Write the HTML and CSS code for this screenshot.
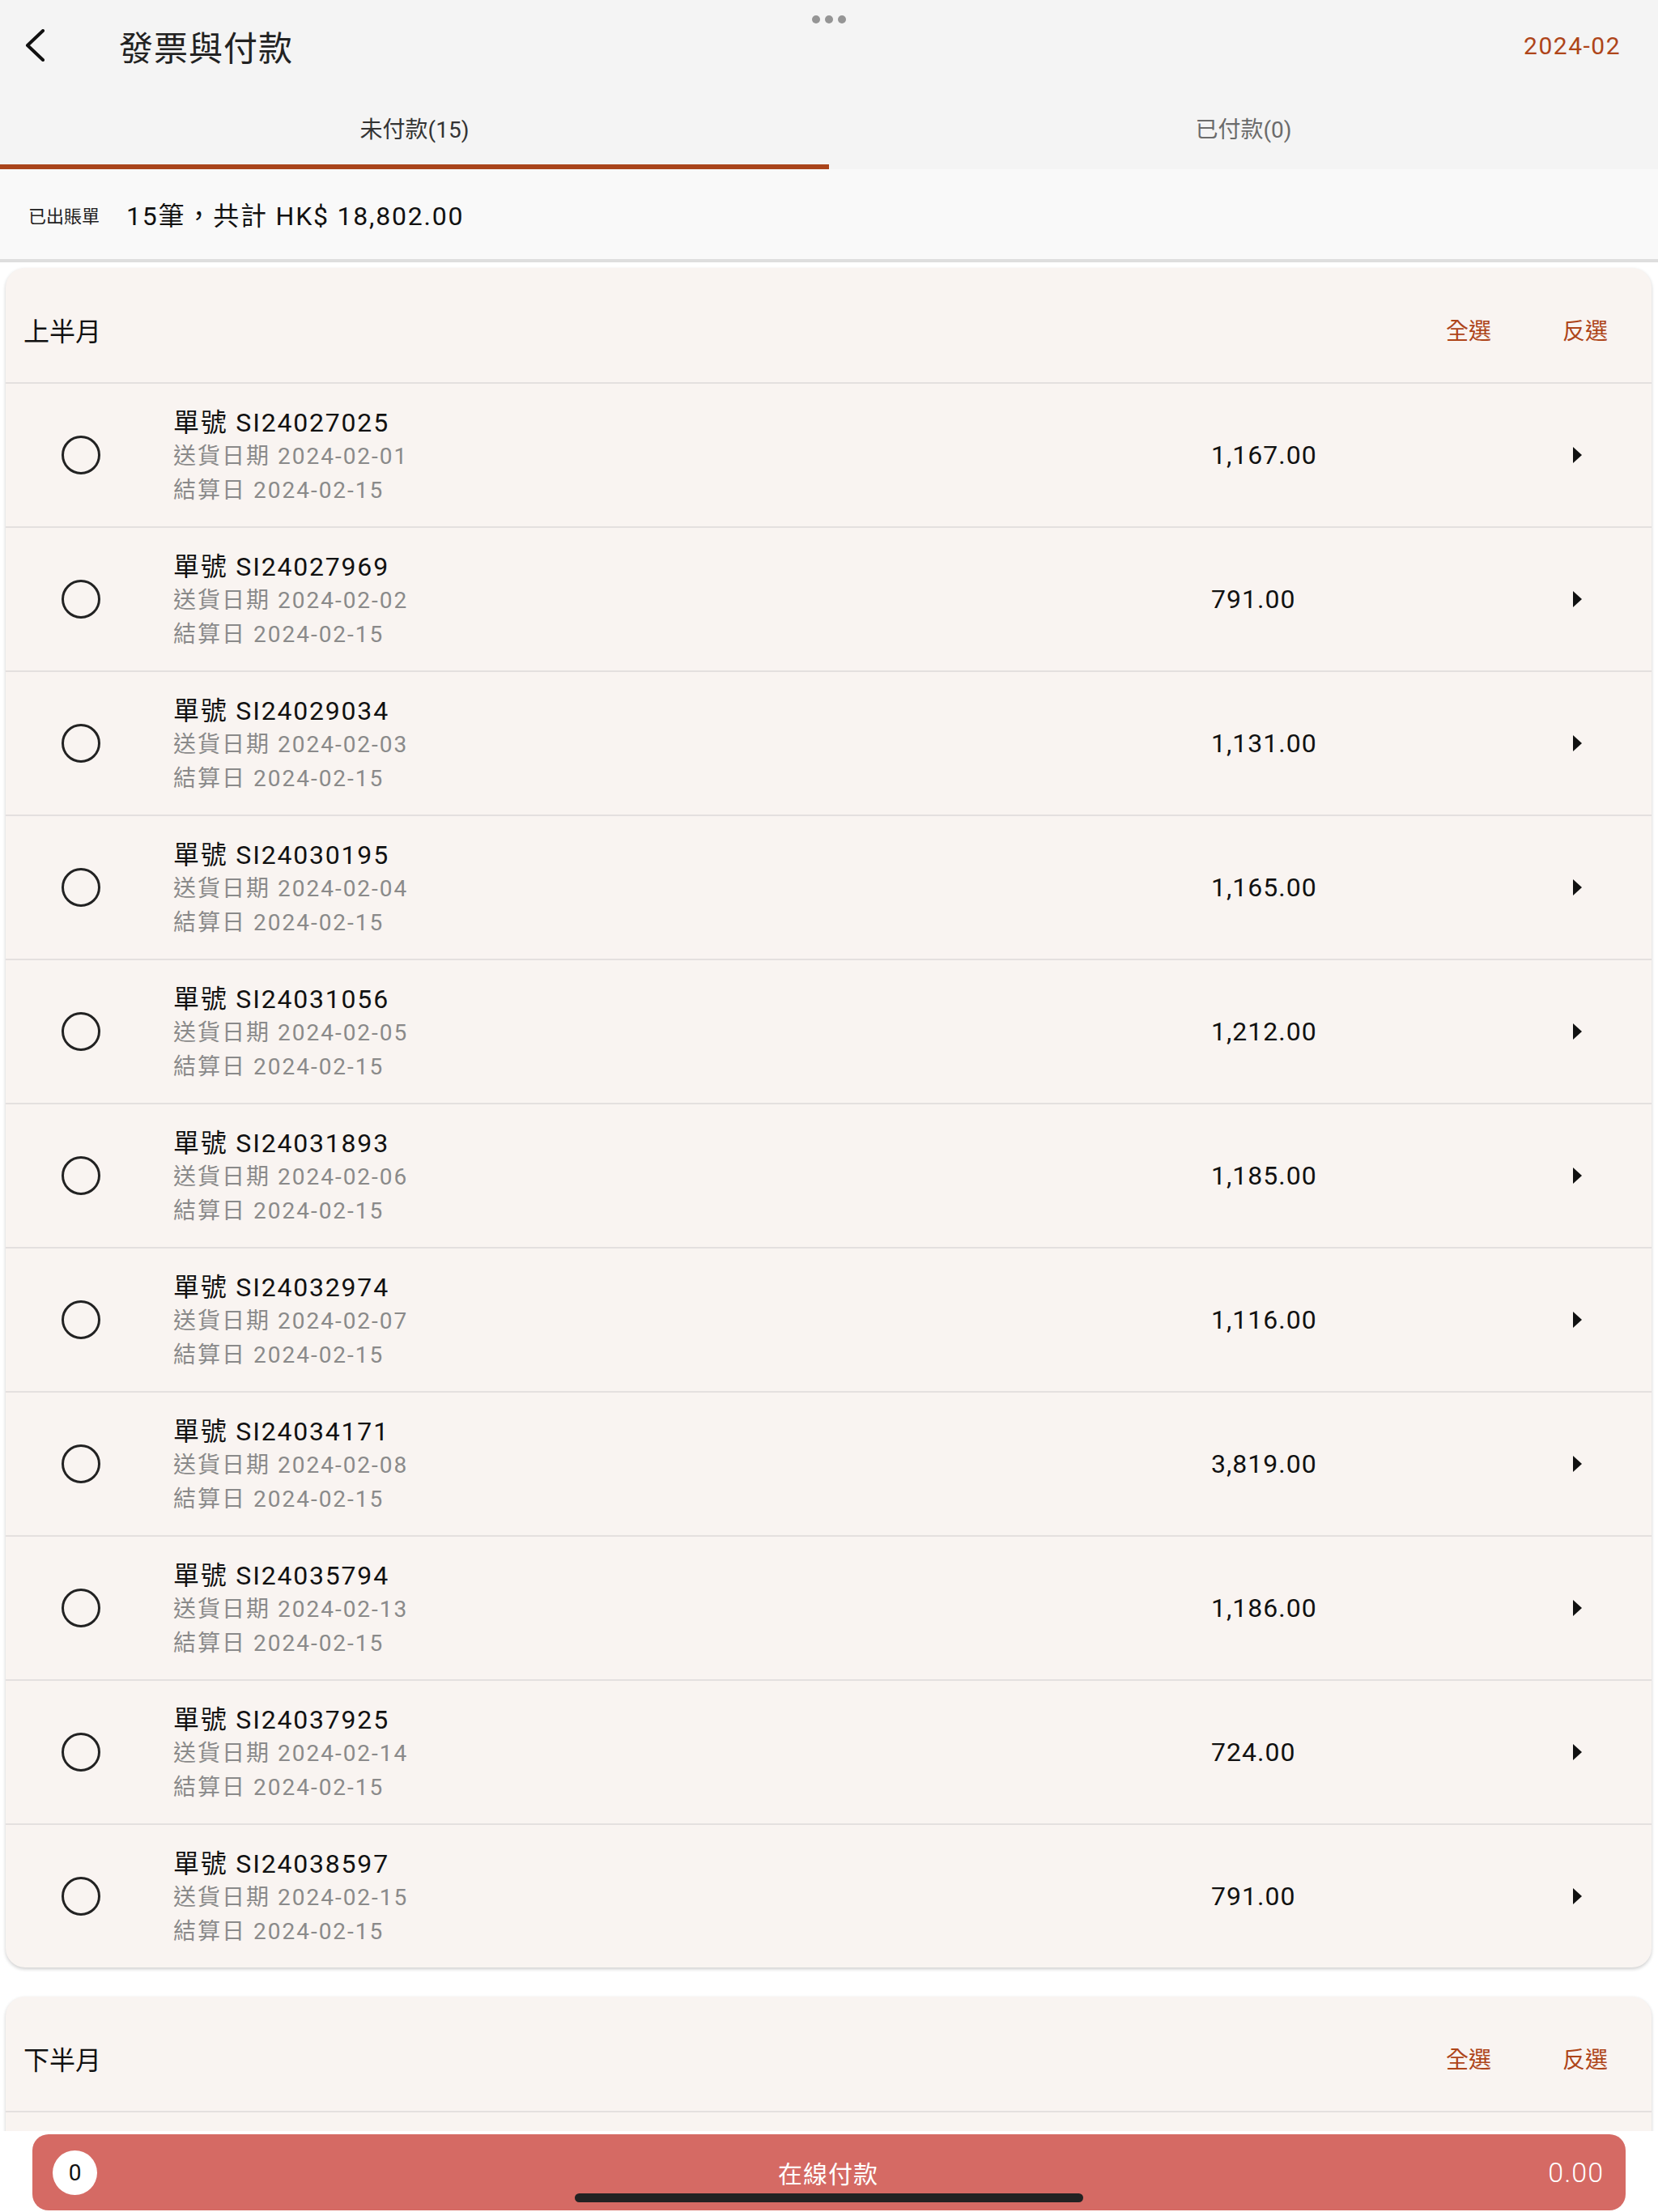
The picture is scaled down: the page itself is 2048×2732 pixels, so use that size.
FILE: index.html
```html
<!DOCTYPE html>
<html lang="zh-Hant-HK">
<head>
<meta charset="utf-8"/>
<meta content="width=device-width, initial-scale=1" name="viewport"/>
<title>發票與付款</title>
<link rel="stylesheet" href="styles.css">
</head>
<body>
<div class="app">
  <div class="dots"><span></span><span></span><span></span></div>

  <header class="topbar">
    <div class="titlebar">
      <a class="back" href="#">
        <svg width="26" height="40" viewBox="0 0 26 40"><polyline points="23,2 4,20 23,38" fill="none" stroke="#111" stroke-width="4" stroke-linecap="round" stroke-linejoin="round"/></svg>
      </a>
      <h1 class="title">發票與付款</h1>
      <span class="month">2024-02</span>
    </div>
    <nav class="tabs">
      <a class="tab active" href="#">未付款(15)</a>
      <a class="tab" href="#">已付款(0)</a>
    </nav>
  </header>

  <div class="summary">
    <span class="summary-label">已出賬單</span>
    <span class="summary-total">15筆，共計 HK$ 18,802.00</span>
  </div>

  <main class="list">
    <section class="card">
      <div class="card-head">
        <span class="card-title">上半月</span>
        <div class="card-actions"><a href="#">全選</a><a href="#">反選</a></div>
      </div>

      <div class="row">
        <span class="radio"></span>
        <div class="info"><div class="info-no">單號 SI24027025</div><div class="info-sub">送貨日期 2024-02-01</div><div class="info-sub">結算日 2024-02-15</div></div>
        <div class="amount">1,167.00</div>
        <span class="arrow"></span>
      </div>
      <div class="row">
        <span class="radio"></span>
        <div class="info"><div class="info-no">單號 SI24027969</div><div class="info-sub">送貨日期 2024-02-02</div><div class="info-sub">結算日 2024-02-15</div></div>
        <div class="amount">791.00</div>
        <span class="arrow"></span>
      </div>
      <div class="row">
        <span class="radio"></span>
        <div class="info"><div class="info-no">單號 SI24029034</div><div class="info-sub">送貨日期 2024-02-03</div><div class="info-sub">結算日 2024-02-15</div></div>
        <div class="amount">1,131.00</div>
        <span class="arrow"></span>
      </div>
      <div class="row">
        <span class="radio"></span>
        <div class="info"><div class="info-no">單號 SI24030195</div><div class="info-sub">送貨日期 2024-02-04</div><div class="info-sub">結算日 2024-02-15</div></div>
        <div class="amount">1,165.00</div>
        <span class="arrow"></span>
      </div>
      <div class="row">
        <span class="radio"></span>
        <div class="info"><div class="info-no">單號 SI24031056</div><div class="info-sub">送貨日期 2024-02-05</div><div class="info-sub">結算日 2024-02-15</div></div>
        <div class="amount">1,212.00</div>
        <span class="arrow"></span>
      </div>
      <div class="row">
        <span class="radio"></span>
        <div class="info"><div class="info-no">單號 SI24031893</div><div class="info-sub">送貨日期 2024-02-06</div><div class="info-sub">結算日 2024-02-15</div></div>
        <div class="amount">1,185.00</div>
        <span class="arrow"></span>
      </div>
      <div class="row">
        <span class="radio"></span>
        <div class="info"><div class="info-no">單號 SI24032974</div><div class="info-sub">送貨日期 2024-02-07</div><div class="info-sub">結算日 2024-02-15</div></div>
        <div class="amount">1,116.00</div>
        <span class="arrow"></span>
      </div>
      <div class="row">
        <span class="radio"></span>
        <div class="info"><div class="info-no">單號 SI24034171</div><div class="info-sub">送貨日期 2024-02-08</div><div class="info-sub">結算日 2024-02-15</div></div>
        <div class="amount">3,819.00</div>
        <span class="arrow"></span>
      </div>
      <div class="row">
        <span class="radio"></span>
        <div class="info"><div class="info-no">單號 SI24035794</div><div class="info-sub">送貨日期 2024-02-13</div><div class="info-sub">結算日 2024-02-15</div></div>
        <div class="amount">1,186.00</div>
        <span class="arrow"></span>
      </div>
      <div class="row">
        <span class="radio"></span>
        <div class="info"><div class="info-no">單號 SI24037925</div><div class="info-sub">送貨日期 2024-02-14</div><div class="info-sub">結算日 2024-02-15</div></div>
        <div class="amount">724.00</div>
        <span class="arrow"></span>
      </div>
      <div class="row">
        <span class="radio"></span>
        <div class="info"><div class="info-no">單號 SI24038597</div><div class="info-sub">送貨日期 2024-02-15</div><div class="info-sub">結算日 2024-02-15</div></div>
        <div class="amount">791.00</div>
        <span class="arrow"></span>
      </div>
    </section>

    <section class="card">
      <div class="card-head">
        <span class="card-title">下半月</span>
        <div class="card-actions"><a href="#">全選</a><a href="#">反選</a></div>
      </div>
      <div class="row row-empty"></div>
    </section>
  </main>

  <footer class="footer">
    <button class="pay" type="button">
      <span class="badge">0</span>
      <span class="pay-label">在線付款</span>
      <span class="pay-amount">0.00</span>
    </button>
  </footer>

  <div class="home-indicator"></div>
</div>
</body>
</html>
```

FILE: styles.css
```css
body {
  margin: 0;
  padding: 0;
  background-color: #fff;
  color: #111;
  font-family: Roboto, "Noto Sans CJK TC", sans-serif;
}
a {
  color: inherit;
  text-decoration: none;
}
.app {
  position: relative;
  height: 2732px;
  display: flex;
  flex-direction: column;
  overflow: hidden;
}
.dots {
  position: absolute;
  top: 19px;
  left: 50%;
  transform: translateX(-50%);
  display: flex;
  gap: 6px;
}
.dots span {
  width: 10px;
  height: 10px;
  border-radius: 50%;
  background-color: #959595;
}
.topbar {
  background-color: #f4f4f4;
  flex-shrink: 0;
}
.titlebar {
  height: 112px;
  display: flex;
  align-items: center;
  padding: 0 46px 0 30px;
}
.back {
  display: flex;
}
.title {
  margin: 0 0 0 91px;
  font-size: 42px;
  font-weight: 400;
  letter-spacing: 1px;
  color: #222;
}
.month {
  margin-left: auto;
  color: #ae4519;
  font-size: 30px;
  letter-spacing: 1.5px;
}
.tabs {
  display: flex;
  height: 97px;
}
.tab {
  flex: 1;
  display: flex;
  align-items: center;
  justify-content: center;
  font-size: 28px;
  color: #6b6b6b;
  border-bottom: 6px solid transparent;
}
.tab.active {
  color: #333;
  border-bottom-color: #a9441b;
}
.summary {
  flex-shrink: 0;
  height: 111px;
  display: flex;
  align-items: center;
  padding-left: 35px;
  background-color: #f9f9f9;
  border-bottom: 4px solid #dedede;
}
.summary-label {
  font-size: 22px;
  color: #222;
  margin-right: 33px;
}
.summary-total {
  font-size: 32px;
  letter-spacing: 1.8px;
  padding-bottom: 2px;
}
.list {
  flex: 1;
  overflow: hidden;
  padding: 7px 8px 0 7px;
  display: flex;
  flex-direction: column;
  gap: 36px;
}
.card {
  flex-shrink: 0;
  background-color: #f9f4f1;
  border-radius: 24px;
  box-shadow: 0 2px 4px rgba(0, 0, 0, 0.2);
}
.card-head {
  height: 141px;
  box-sizing: border-box;
  display: flex;
  align-items: center;
  padding: 10px 54px 0 22px;
}
.card-title {
  font-size: 32px;
}
.card-actions {
  margin-left: auto;
  display: flex;
  gap: 88px;
}
.card-actions a {
  font-size: 28px;
  color: #ae4519;
}
.row {
  display: grid;
  grid-template-columns: 207px 1fr 447px 97px;
  align-items: center;
  height: 178px;
  box-sizing: border-box;
  border-top: 2px solid #e4e0df;
}
.radio {
  width: 48px;
  height: 48px;
  margin-left: 69px;
  box-sizing: border-box;
  border: 3px solid #222;
  border-radius: 50%;
}
.info {
  line-height: 42px;
  padding-top: 3px;
}
.info-no {
  font-size: 32px;
  letter-spacing: 1.8px;
  color: #111;
}
.info-sub {
  font-size: 28px;
  letter-spacing: 2px;
  color: #8a8a8a;
}
.amount {
  font-size: 32px;
  letter-spacing: 1px;
}
.arrow {
  width: 0;
  height: 0;
  border-left: 11px solid #111;
  border-top: 10px solid transparent;
  border-bottom: 10px solid transparent;
}
.footer {
  flex-shrink: 0;
  height: 100px;
  box-sizing: border-box;
  padding: 4px 40px 2px;
  background-color: #fff;
}
.pay {
  width: 100%;
  height: 94px;
  border: none;
  border-radius: 20px;
  background-color: #d56a64;
  color: #fff;
  font-family: inherit;
  display: grid;
  grid-template-columns: 1fr auto 1fr;
  align-items: center;
  padding: 0 27px 0 25px;
}
.badge {
  width: 55px;
  height: 55px;
  border-radius: 50%;
  background-color: #fff;
  color: #111;
  font-size: 28px;
  display: flex;
  align-items: center;
  justify-content: center;
}
.pay-label {
  font-size: 30px;
  letter-spacing: 1px;
}
.pay-amount {
  justify-self: end;
  font-size: 34px;
  font-weight: 300;
  letter-spacing: 1px;
}
.home-indicator {
  position: absolute;
  bottom: 12px;
  left: 50%;
  transform: translateX(-50%);
  width: 628px;
  height: 11px;
  border-radius: 6px;
  background-color: #222;
}
```
